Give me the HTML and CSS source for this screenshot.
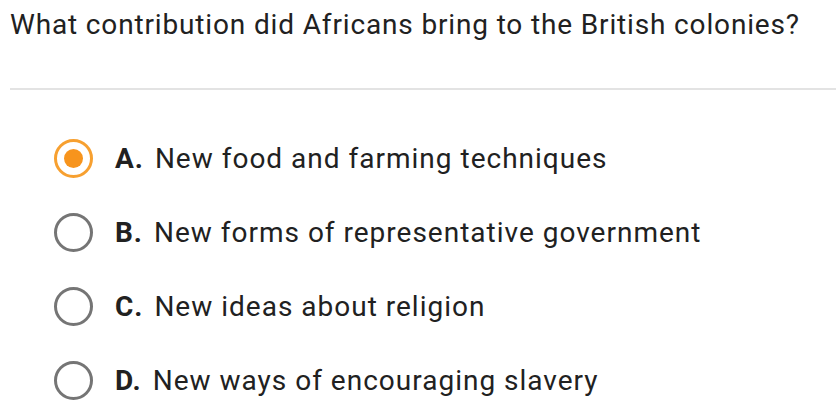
FILE: index.html
```html
<!DOCTYPE html>
<html>
<head>
<meta charset="utf-8">
<link rel="stylesheet" href="styles.css">
</head>
<body>
<div class="quiz">
  <div class="question">What contribution did Africans bring to the British colonies?</div>
  <div class="divider"></div>
  <ul class="options">
    <li class="option selected"><span class="radio"><span class="dot"></span></span><span class="label"><b>A.</b> New food and farming techniques</span></li>
    <li class="option"><span class="radio"></span><span class="label"><b>B.</b> New forms of representative government</span></li>
    <li class="option"><span class="radio"></span><span class="label"><b>C.</b> New ideas about religion</span></li>
    <li class="option"><span class="radio"></span><span class="label"><b>D.</b> New ways of encouraging slavery</span></li>
  </ul>
</div>
</body>
</html>
```
FILE: styles.css
```css
html, body {
  margin: 0;
  padding: 0;
  background: #ffffff;
}
body {
  font-family: Roboto, "Liberation Sans", sans-serif;
  color: #212121;
  width: 836px;
  height: 414px;
  overflow: hidden;
}
.quiz {
  padding-left: 10px;
}
.question {
  font-size: 28px;
  letter-spacing: 0.85px;
  line-height: 32px;
  padding-top: 9px;
  height: 49px;
}
.divider {
  height: 2px;
  background: #e3e3e3;
  margin-top: 30px;
}
.options {
  list-style: none;
  margin: 0;
  padding: 48px 0 0 44px;
  display: flex;
  flex-direction: column;
  gap: 34px;
}
.option {
  display: flex;
  align-items: center;
  gap: 22px;
  height: 40px;
}
.radio {
  box-sizing: border-box;
  width: 39px;
  height: 39px;
  border: 3px solid #757575;
  border-radius: 50%;
  display: flex;
  align-items: center;
  justify-content: center;
  flex: none;
}
.selected .radio {
  border-color: #f7a030;
}
.dot {
  width: 19px;
  height: 19px;
  border-radius: 50%;
  background: #f7941d;
}
.label {
  font-size: 28px;
  letter-spacing: 1px;
  line-height: 32px;
  padding-top: 2px;
}
.label b {
  font-weight: 700;
  margin-right: 3px;
}
```
